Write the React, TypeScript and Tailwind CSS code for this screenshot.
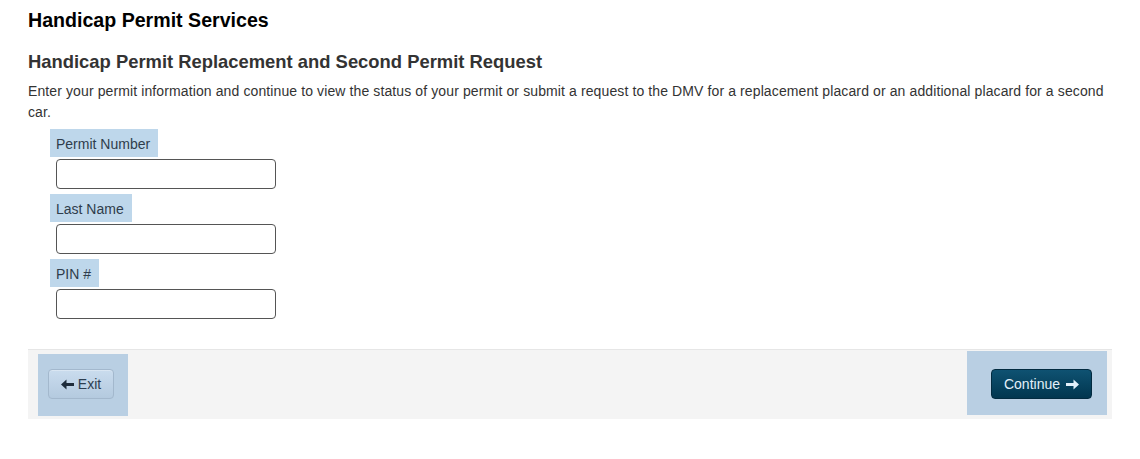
export default function App() {
  const fields = [
    { id: "permit", label: "Permit Number" },
    { id: "lastName", label: "Last Name" },
    { id: "pin", label: "PIN #" },
  ];

  return (
    <div className="min-h-screen bg-white font-['Liberation_Sans',Arial,sans-serif] text-[#333] pl-[28px] pr-[28px] pt-[8px]">
      {/* Headings */}
      <h1 className="text-[19.6px] leading-[24px] font-bold text-black">Handicap Permit Services</h1>
      <h2 className="mt-[19px] text-[18.4px] leading-[22px] font-bold text-[#333]">
        Handicap Permit Replacement and Second Permit Request
      </h2>
      <p className="mt-[8px] text-[14px] leading-[21px] tracking-[0.11px]">
        Enter your permit information and continue to view the status of your permit or submit a request to the DMV for a replacement placard or an additional placard for a second car.
      </p>

      {/* Form */}
      <div className="mt-[6px] pl-[22px] flex flex-col">
        {fields.map((f) => (
          <div key={f.id} className="flex flex-col items-start mb-[5px]">
            <label
              htmlFor={f.id}
              className="bg-[#bed7eb] text-[14px] leading-[20px] pt-[5px] pb-[3px] pl-[6px] pr-[8px] text-[#2f3d4c]"
            >
              {f.label}
            </label>
            <input
              id={f.id}
              type="text"
              className="mt-[2px] ml-[6px] w-[220px] h-[30px] rounded-[4px] border border-[#555] bg-white px-2 text-[14px] outline-none"
            />
          </div>
        ))}
      </div>

      {/* Footer actions */}
      <div className="mt-[25px] h-[70px] border-t border-[#e6e6e6] bg-[#f4f4f4] pl-[10px] pr-[5px] flex justify-between items-start">
        <div className="mt-[4px] h-[62px] bg-[#b9cfe3] pl-[10px] pr-[14px] pt-[15px]">
          <button className="h-[30px] w-[66px] rounded-[4px] border border-[#a3b8cd] bg-gradient-to-b from-[#cadcee] to-[#b4cadf] text-[14px] text-[#2d3e50] flex items-center justify-center gap-[4px] shadow-[inset_0_1px_0_rgba(255,255,255,0.3)]">
            <svg width="13" height="11" viewBox="0 0 13 11" className="shrink-0">
              <path d="M0 5.5L5.5 0.5v3.5H13v3H5.5v3.5z" fill="#1e2c3b" />
            </svg>
            <span>Exit</span>
          </button>
        </div>
        <div className="mt-[1px] h-[64px] bg-[#b9cfe3] pl-[24px] pr-[15px] pt-[18px]">
          <button className="h-[30px] w-[101px] rounded-[4px] border border-[#032b40] bg-gradient-to-b from-[#0f5272] to-[#02364f] text-[14px] text-[#e3f0fa] flex items-center justify-center gap-[6px]">
            <span>Continue</span>
            <svg width="13" height="11" viewBox="0 0 13 11" className="shrink-0">
              <path d="M13 5.5L7.5 0.5v3.5H0v3h7.5v3.5z" fill="#e3f0fa" />
            </svg>
          </button>
        </div>
      </div>
    </div>
  );
}
